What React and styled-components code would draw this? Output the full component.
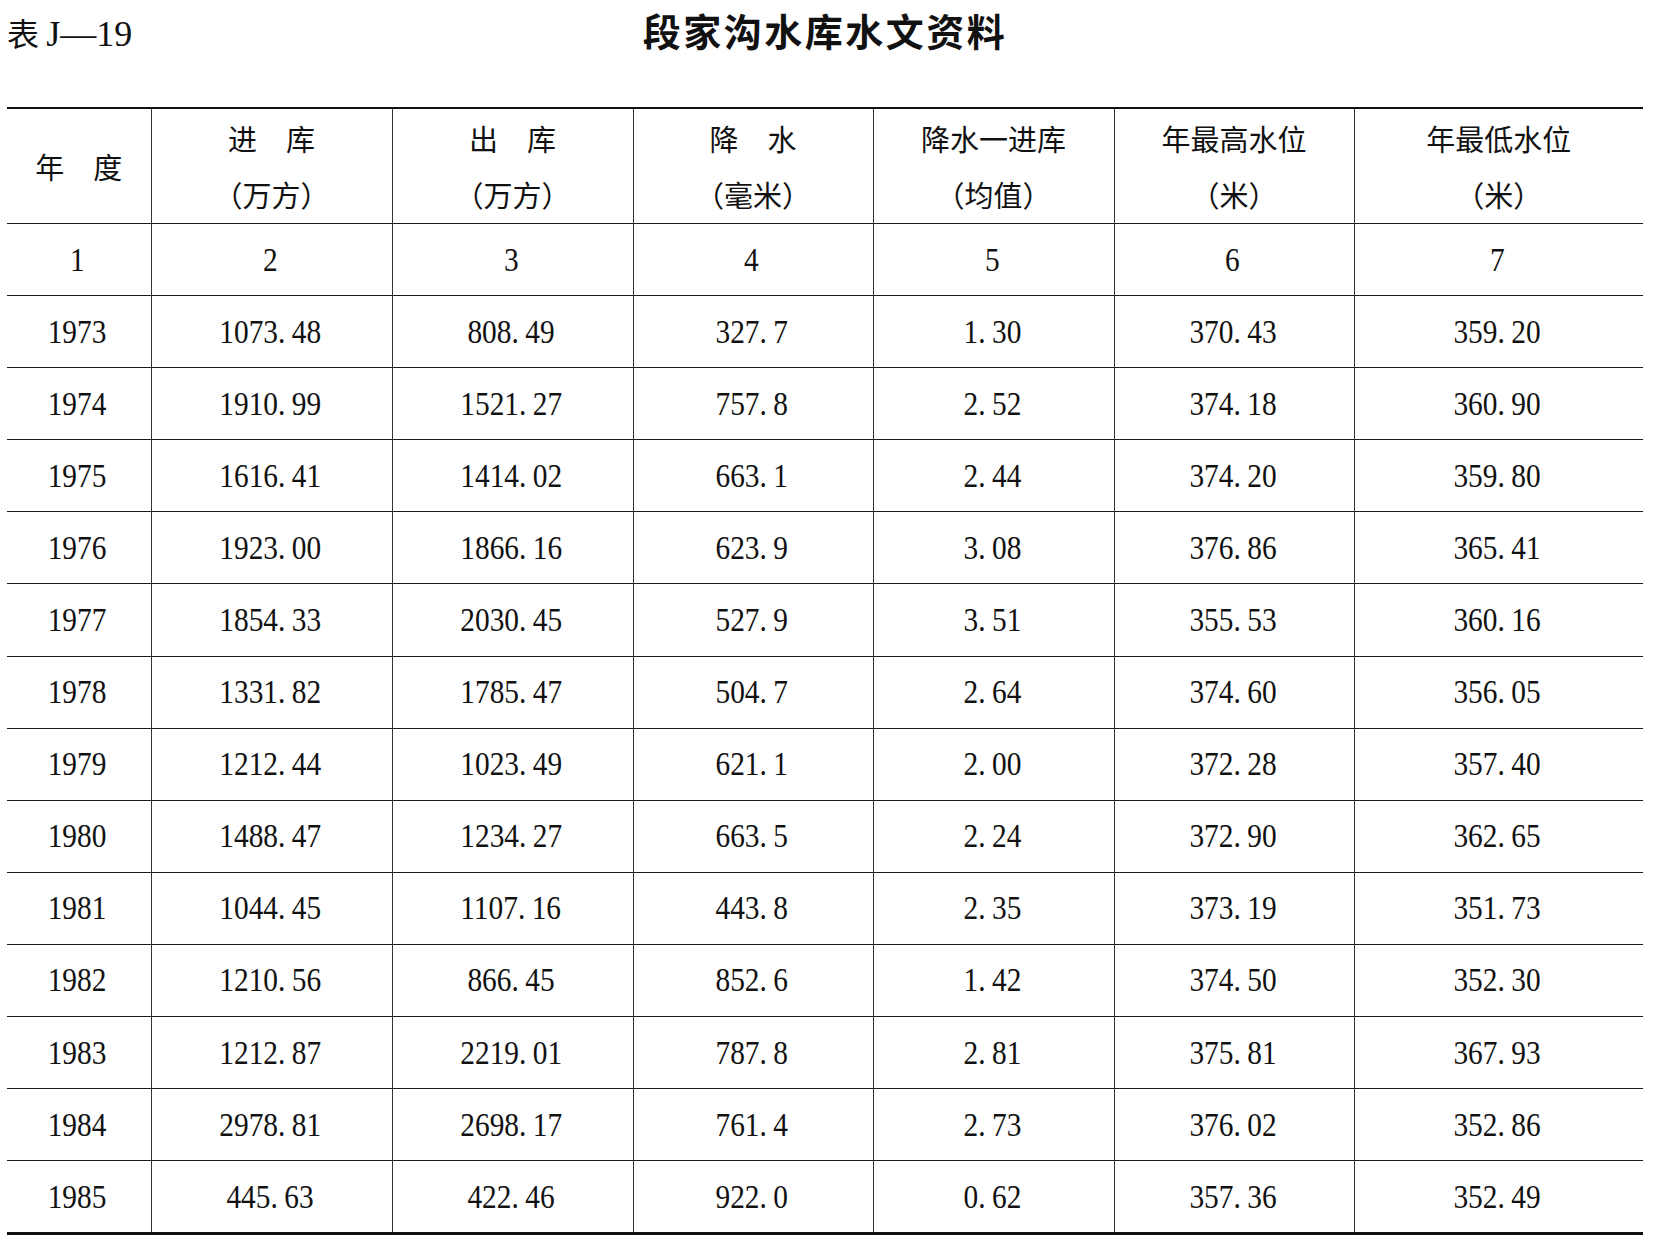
import styled, { createGlobalStyle } from "styled-components";

const GlobalStyle = createGlobalStyle`
  body {
    margin: 0;
    background: #fff;
    color: #111;
    font-family: "Liberation Serif", "Noto Sans CJK SC", serif;
  }
`;

const columns = [
  { width: 144, lines: ["年　度"] },
  { width: 241, lines: ["进　库", "（万方）"] },
  { width: 241, lines: ["出　库", "（万方）"] },
  { width: 240, lines: ["降　水", "（毫米）"] },
  { width: 241, lines: ["降水一进库", "（均值）"] },
  { width: 240, lines: ["年最高水位", "（米）"] },
  { width: 289, lines: ["年最低水位", "（米）"] },
];

const rows = [
  ["1973", "1073.48", "808.49", "327.7", "1.30", "370.43", "359.20"],
  ["1974", "1910.99", "1521.27", "757.8", "2.52", "374.18", "360.90"],
  ["1975", "1616.41", "1414.02", "663.1", "2.44", "374.20", "359.80"],
  ["1976", "1923.00", "1866.16", "623.9", "3.08", "376.86", "365.41"],
  ["1977", "1854.33", "2030.45", "527.9", "3.51", "355.53", "360.16"],
  ["1978", "1331.82", "1785.47", "504.7", "2.64", "374.60", "356.05"],
  ["1979", "1212.44", "1023.49", "621.1", "2.00", "372.28", "357.40"],
  ["1980", "1488.47", "1234.27", "663.5", "2.24", "372.90", "362.65"],
  ["1981", "1044.45", "1107.16", "443.8", "2.35", "373.19", "351.73"],
  ["1982", "1210.56", "866.45", "852.6", "1.42", "374.50", "352.30"],
  ["1983", "1212.87", "2219.01", "787.8", "2.81", "375.81", "367.93"],
  ["1984", "2978.81", "2698.17", "761.4", "2.73", "376.02", "352.86"],
  ["1985", "445.63", "422.46", "922.0", "0.62", "357.36", "352.49"],
];

function Value({ text }) {
  const [whole, frac] = text.split(".");
  return (
    <Num>
      {whole}
      {frac !== undefined && (
        <>
          <Dot>.</Dot>
          {frac}
        </>
      )}
    </Num>
  );
}

export default function App() {
  return (
    <Page>
      <GlobalStyle />
      <TitleBar>
        <TableNo>
          表 <span>J—19</span>
        </TableNo>
        <Title>段家沟水库水文资料</Title>
        <span />
      </TitleBar>
      <Table>
        <colgroup>
          {columns.map((c, i) => (
            <col key={i} style={{ width: c.width }} />
          ))}
        </colgroup>
        <thead>
          <HeadRow>
            {columns.map((c, i) => (
              <HeadCell key={i}>
                {c.lines.map((l, j) => (
                  <HeadLine key={j}>{l}</HeadLine>
                ))}
              </HeadCell>
            ))}
          </HeadRow>
          <Row>
            {columns.map((c, i) => (
              <Cell key={i}>
                <Value text={String(i + 1)} />
              </Cell>
            ))}
          </Row>
        </thead>
        <tbody>
          {rows.map((r, i) => (
            <Row key={r[0]} $last={i === rows.length - 1}>
              {r.map((v, j) => (
                <Cell key={j}>
                  <Value text={v} />
                </Cell>
              ))}
            </Row>
          ))}
        </tbody>
      </Table>
    </Page>
  );
}

const Page = styled.div`
  width: 1636px;
  padding: 0 0 14px 7px;
`;

const TitleBar = styled.div`
  height: 107px;
  display: grid;
  grid-template-columns: 1fr auto 1fr;
  align-items: start;
`;

const TableNo = styled.div`
  margin-top: 8px;
  font-family: "Noto Sans CJK SC", sans-serif;
  font-size: 32px;
  line-height: 48px;
  white-space: nowrap;

  span {
    font-family: "Liberation Serif", serif;
    font-size: 36px;
  }
`;

const Title = styled.h1`
  margin: 6px 0 0;
  font-family: "Noto Sans CJK SC", sans-serif;
  font-weight: 700;
  font-size: 38px;
  line-height: 48px;
  letter-spacing: 2.5px;
`;

const Table = styled.table`
  width: 1636px;
  border-collapse: collapse;
  table-layout: fixed;
`;

const HeadRow = styled.tr`
  border-top: 2px solid #111;
`;

const Row = styled.tr`
  border-top: 1px solid #1a1a1a;
  border-bottom: ${(p) => (p.$last ? "3px solid #111" : "none")};
`;

const HeadCell = styled.th`
  height: 114px;
  padding: 0;
  font-weight: 400;
  text-align: center;
  vertical-align: middle;
  border-left: 1px solid #333;

  &:first-child {
    border-left: none;
  }
`;

const HeadLine = styled.div`
  font-family: "Noto Sans CJK SC", sans-serif;
  font-size: 29px;
  line-height: 56px;
  white-space: nowrap;
`;

const Cell = styled.td`
  height: 71.1px;
  padding: 0 3px 0 0;
  text-align: center;
  vertical-align: middle;
  border-left: 1px solid #333;

  &:first-child {
    border-left: none;
  }
`;

const Num = styled.span`
  display: inline-block;
  font-family: "Liberation Serif", serif;
  font-size: 33px;
  line-height: 40px;
  transform: scaleX(0.89);
  white-space: nowrap;
`;

const Dot = styled.span`
  margin-right: 0.22em;
`;
